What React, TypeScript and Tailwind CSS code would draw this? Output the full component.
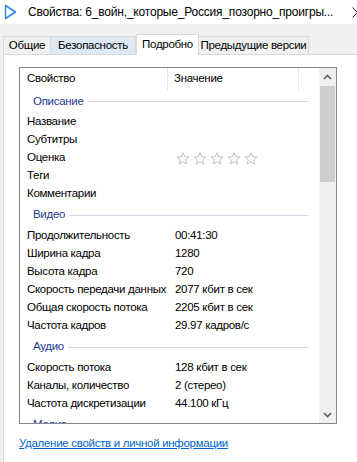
import type { ReactNode } from "react";

type Row = { name: string; value?: ReactNode };
type Group = { title: string; first?: boolean; rows: Row[] };

function Stars() {
  return (
    <div className="flex items-center gap-[3px] ml-px">
      {[0, 1, 2, 3, 4].map((i) => (
        <svg key={i} width="14" height="13" viewBox="0 0 14 13">
          <path
            d="M7 0.8 L8.7 4.7 L12.9 5 L9.7 7.8 L10.7 12 L7 9.7 L3.3 12 L4.3 7.8 L1.1 5 L5.3 4.7 Z"
            fill="none"
            stroke="#b8b8b8"
            strokeWidth="0.9"
            strokeLinejoin="round"
          />
        </svg>
      ))}
    </div>
  );
}

const groups: Group[] = [
  {
    title: "Описание",
    first: true,
    rows: [
      { name: "Название" },
      { name: "Субтитры" },
      { name: "Оценка", value: <Stars /> },
      { name: "Теги" },
      { name: "Комментарии" },
    ],
  },
  {
    title: "Видео",
    rows: [
      { name: "Продолжительность", value: "00:41:30" },
      { name: "Ширина кадра", value: "1280" },
      { name: "Высота кадра", value: "720" },
      { name: "Скорость передачи данных", value: "2077 кбит в сек" },
      { name: "Общая скорость потока", value: "2205 кбит в сек" },
      { name: "Частота кадров", value: "29.97 кадров/с" },
    ],
  },
  {
    title: "Аудио",
    rows: [
      { name: "Скорость потока", value: "128 кбит в сек" },
      { name: "Каналы, количество", value: "2 (стерео)" },
      { name: "Частота дискретизации", value: "44.100 кГц" },
    ],
  },
  {
    title: "Медиа",
    rows: [],
  },
];

function Chevron({ up }: { up?: boolean }) {
  return (
    <svg width="9" height="6" viewBox="0 0 9 6">
      <path
        d={up ? "M1 5 L4.5 1.5 L8 5" : "M1 1 L4.5 4.5 L8 1"}
        fill="none"
        stroke="#606060"
        strokeWidth="1.6"
      />
    </svg>
  );
}

const tabs = [
  { label: "Общие", w: "w-[48px]", cls: "bg-[#f0f0f0]" },
  { label: "Безопасность", w: "w-[86px]", cls: "bg-[#dde9f5]" },
  { label: "Подробно", w: "w-[63px]", cls: "" },
  { label: "Предыдущие версии", w: "w-[111px]", cls: "bg-[#f0f0f0]" },
];

export default function App() {
  return (
    <div className="w-[357px] h-[462px] overflow-hidden bg-[#f0f0f0] text-[11.5px] tracking-[-0.3px] text-black font-['Segoe_UI','Liberation_Sans',sans-serif] flex flex-col">
      {/* title bar */}
      <div className="h-[24px] bg-white flex items-center shrink-0 overflow-hidden">
        <svg className="ml-[4px] shrink-0" width="13" height="16" viewBox="0 0 13 16">
          <path
            d="M1.5 1.5 L11.5 8 L1.5 14.5 Z"
            fill="none"
            stroke="#2f86d9"
            strokeWidth="1.5"
            strokeLinejoin="round"
          />
        </svg>
        <span className="ml-[11px] whitespace-nowrap leading-none text-[12px] tracking-[-0.2px]">
          Свойства: 6_войн,_которые_Россия_позорно_проигры...
        </span>
        <svg className="ml-auto mr-[-6px] shrink-0" width="11" height="11" viewBox="0 0 11 11">
          <path d="M0.5 0.5 L10.5 10.5 M10.5 0.5 L0.5 10.5" stroke="#222" strokeWidth="1" />
        </svg>
      </div>

      {/* tabs */}
      <div className="h-[30px] shrink-0 flex items-end pl-[3px] relative z-10">
        {tabs.map((t) =>
          t.label === "Подробно" ? (
            <div
              key={t.label}
              className={`${t.w} h-[21px] -mb-px bg-white border border-b-0 border-[#d9d9d9] flex items-center justify-center pb-[1px] whitespace-nowrap`}
            >
              {t.label}
            </div>
          ) : (
            <div
              key={t.label}
              className={`${t.w} ${t.cls} h-[18px] border border-b-0 border-[#d9d9d9] -ml-px first:ml-0 flex items-center justify-center whitespace-nowrap`}
            >
              {t.label}
            </div>
          )
        )}
      </div>

      {/* pane */}
      <div className="flex-1 ml-[3px] bg-white border-l border-t border-[#d9d9d9]">
        <div className="mt-[12px] ml-[15px] w-[318px] h-[357px] border border-[#828790] flex">
          <div className="w-[299px] overflow-hidden">
            <div className="h-[22px] flex items-stretch">
              <div className="w-[148px] pl-[7px] flex items-center border-r border-[#e5e5e5]">Свойство</div>
              <div className="w-[131px] pl-[6px] flex items-center border-r border-[#e5e5e5]">Значение</div>
            </div>
            {groups.map((g) => (
              <div key={g.title}>
                <div className={`${g.first ? "h-[23px]" : "h-[24px]"} flex items-center pl-[13px] pr-[11px]`}>
                  <span className="text-[#1e3991]">{g.title}</span>
                  <div className="flex-1 h-px bg-[#cfd6e2] ml-[4px]" />
                </div>
                {g.rows.map((r) => (
                  <div key={r.name} className="h-[18px] flex items-center">
                    <div className="w-[155px] pl-[7px] whitespace-nowrap">{r.name}</div>
                    <div className="whitespace-nowrap flex items-center">{r.value}</div>
                  </div>
                ))}
              </div>
            ))}
          </div>
          <div className="w-[17px] bg-[#f0f0f0] flex flex-col">
            <div className="h-[17px] flex items-center justify-center">
              <Chevron up />
            </div>
            <div className="h-[96px] mt-px bg-[#cdcdcd] mx-px" />
            <div className="flex-1" />
            <div className="h-[17px] flex items-center justify-center">
              <Chevron />
            </div>
          </div>
        </div>
        <div className="mt-[11px] ml-[15px] leading-[16px]">
          <span className="text-[#0066cc] underline">Удаление свойств и личной информации</span>
        </div>
      </div>
    </div>
  );
}
